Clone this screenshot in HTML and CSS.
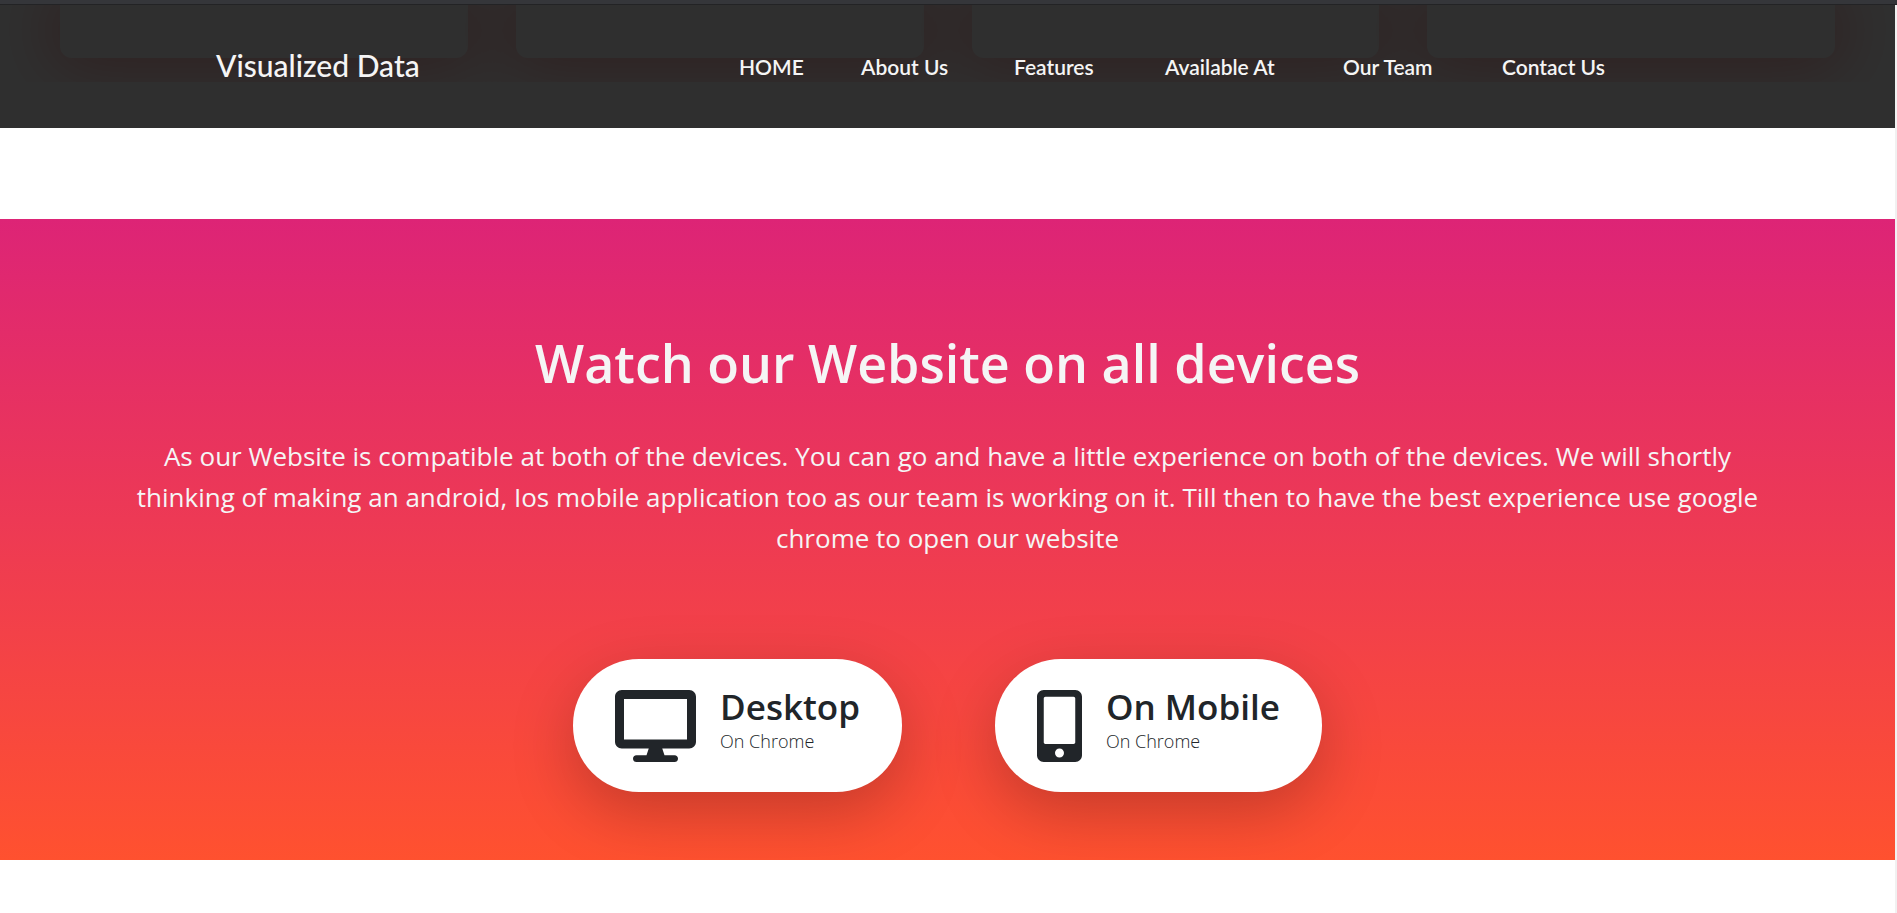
FILE: index.html
```
<!DOCTYPE html>
<html lang="en">
<head>
    <meta charset="UTF-8">
    <meta name="viewport" content="width=device-width, initial-scale=1.0">
    <title>Visualized Data</title>
    <link rel="stylesheet" href="styles.css">
</head>
<body>
    <div class="top-strip"></div>
    <div class="page">
        <header class="header">
            <a href="#" class="logo">Visualized Data</a>
            <nav class="navbar">
                <a href="#home">HOME</a>
                <a href="#about">About Us</a>
                <a href="#features">Features</a>
                <a href="#available">Available At</a>
                <a href="#team">Our Team</a>
                <a href="#contact">Contact Us</a>
            </nav>
        </header>

        <section class="features" id="features">
            <div class="card"></div>
            <div class="card"></div>
            <div class="card"></div>
            <div class="card"></div>
        </section>

        <section class="available" id="available">
            <h1>Watch our Website on all devices</h1>
            <p>As our Website is compatible at both of the devices. You can go and have a little experience on both of the devices. We will shortly thinking of making an android, Ios mobile application too as our team is working on it. Till then to have the best experience use google chrome to open our website</p>
            <div class="devices">
                <button type="button" class="device-btn">
                    <svg class="icon-desktop" viewBox="0 0 576 512" aria-hidden="true">
                        <path fill="currentColor" d="M528 0H48C21.500 0 0 21.500 0 48v320c0 26.500 21.500 48 48 48h192l-16 48h-72c-13.300 0-24 10.700-24 24s10.700 24 24 24h272c13.300 0 24-10.700 24-24s-10.700-24-24-24h-72l-16-48h192c26.500 0 48-21.500 48-48V48c0-26.500-21.500-48-48-48zm-16 352H64V64h448v288z"/>
                    </svg>
                    <span class="device-text">
                        <span class="device-name">Desktop</span>
                        <span class="device-note">On Chrome</span>
                    </span>
                </button>
                <button type="button" class="device-btn">
                    <svg class="icon-mobile" viewBox="0 0 320 512" aria-hidden="true">
                        <path fill="currentColor" d="M272 0H48C21.500 0 0 21.500 0 48v416c0 26.500 21.500 48 48 48h224c26.500 0 48-21.500 48-48V48c0-26.500-21.500-48-48-48zM160 480c-17.700 0-32-14.300-32-32s14.300-32 32-32 32 14.300 32 32-14.300 32-32 32zm112-108c0 6.600-5.400 12-12 12H60c-6.600 0-12-5.400-12-12V60c0-6.600 5.400-12 12-12h200c6.600 0 12 5.400 12 12v312z"/>
                    </svg>
                    <span class="device-text">
                        <span class="device-name">On Mobile</span>
                        <span class="device-note">On Chrome</span>
                    </span>
                </button>
            </div>
        </section>
    </div>
</body>
</html>
```
FILE: styles.css
```
* {
    box-sizing: border-box;
}
body {
    margin: 0;
    font-family: "Open Sans", "Noto Sans", sans-serif;
    color: #212529;
    background-color: #fff;
}
.top-strip {
    height: 5px;
    background-color: #35363a;
    border-bottom: 1px solid #232325;
}
.page {
    position: relative;
    min-height: calc(100vh - 5px);
    border-right: 2px solid #f1f1f1;
}

/* header */
.header {
    position: absolute;
    top: 0;
    left: 0;
    right: 0;
    z-index: 10;
    height: 123px;
    padding: 0 288px 0 216px;
    display: flex;
    align-items: center;
    justify-content: space-between;
    background-color: rgba(29, 29, 29, 0.92);
    font-family: Lato, sans-serif;
}
.header a {
    color: #f5f5f5;
    text-decoration: none;
    white-space: nowrap;
}
.logo {
    font-size: 30px;
    font-weight: 500;
    line-height: 36px;
    padding-bottom: 4px;
}
.navbar {
    display: grid;
    grid-template-columns: 122px 153px 151px 178px 159px 105px;
    font-size: 21px;
    font-weight: 600;
}

/* features */
.features {
    display: grid;
    grid-template-columns: repeat(4, 1fr);
    gap: 48px;
    padding: 0 60px 24px;
    overflow: hidden;
}
.card {
    height: 53px;
    background-color: #fff;
    border-radius: 0 0 12px 12px;
    box-shadow: 0 0 64px 8px rgba(255, 0, 0, 0.8);
}

/* available at */
.available {
    margin-top: 137px;
    padding: 106px 120px 68px;
    text-align: center;
    color: #f5f5f5;
    background: linear-gradient(to bottom, #dd2476, #ff512f);
    overflow: hidden;
}
.available h1 {
    margin: 0 0 35px;
    font-size: 52px;
    font-weight: 600;
    line-height: 76px;
}
.available p {
    margin: 0;
    font-size: 26px;
    line-height: 41px;
}
.devices {
    display: flex;
    justify-content: center;
    gap: 93px;
    margin-top: 100px;
}
.device-btn {
    display: flex;
    align-items: flex-start;
    gap: 24px;
    height: 133px;
    padding: 31px 42px;
    border: none;
    border-radius: 66px;
    background-color: #fff;
    color: #212529;
    font-family: inherit;
    text-align: left;
    cursor: pointer;
    box-shadow: 0 20px 64px rgba(0, 0, 0, 0.22);
}
.icon-desktop,
.icon-mobile {
    height: 72px;
}
.device-text {
    display: flex;
    flex-direction: column;
}
.device-name {
    font-size: 35px;
    font-weight: 600;
    line-height: 34px;
}
.device-note {
    font-size: 18px;
    font-weight: 300;
    line-height: 34px;
}
```
